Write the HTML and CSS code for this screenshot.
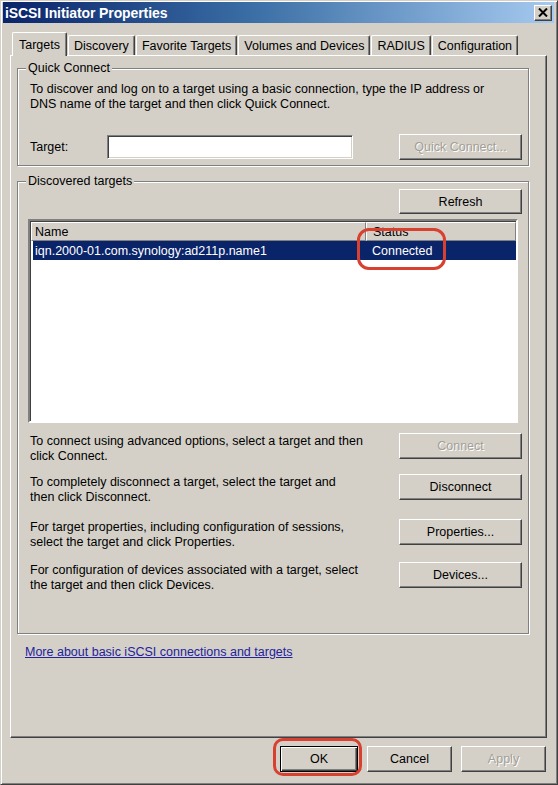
FILE: index.html
```html
<!DOCTYPE html>
<html>
<head>
<meta charset="utf-8">
<title>iSCSI Initiator Properties</title>
<link rel="stylesheet" href="styles.css">
</head>
<body>
<div class="window">
  <div class="titlebar">
    <span class="title">iSCSI Initiator Properties</span>
    <span class="close"><svg width="10" height="9" viewBox="0 0 10 9"><path d="M1 0.5 L9 8.5 M9 0.5 L1 8.5" stroke="#000" stroke-width="2" fill="none"/></svg></span>
  </div>
  <div class="content">
    <div class="tabs">
      <div class="tab active">Targets</div>
      <div class="tab">Discovery</div>
      <div class="tab">Favorite Targets</div>
      <div class="tab">Volumes and Devices</div>
      <div class="tab">RADIUS</div>
      <div class="tab">Configuration</div>
    </div>
    <div class="sheet">
      <fieldset class="group group-qc">
        <legend>Quick Connect</legend>
        <p class="qc-text">To discover and log on to a target using a basic connection, type the IP address or<br>DNS name of the target and then click Quick Connect.</p>
        <div class="qc-row">
          <span class="qc-label">Target:</span>
          <span class="input"></span>
          <span class="btn btn-wide disabled">Quick Connect...</span>
        </div>
      </fieldset>
      <fieldset class="group group-dt">
        <legend>Discovered targets</legend>
        <div class="refresh-row"><span class="btn btn-wide btn-refresh">Refresh</span></div>
        <div class="list">
          <div class="list-head">
            <div class="hcell hcell-name">Name</div>
            <div class="hcell hcell-status">Status</div>
          </div>
          <div class="list-row selected">
            <div class="cell cell-name">iqn.2000-01.com.synology:ad211p.name1</div>
            <div class="cell cell-status">Connected</div>
          </div>
        </div>
        <div class="action action-first">
          <p class="action-text">To connect using advanced options, select a target and then<br>click Connect.</p>
          <span class="btn btn-wide disabled">Connect</span>
        </div>
        <div class="action action-second">
          <p class="action-text">To completely disconnect a target, select the target and<br>then click Disconnect.</p>
          <span class="btn btn-wide">Disconnect</span>
        </div>
        <div class="action action-third">
          <p class="action-text">For target properties, including configuration of sessions,<br>select the target and click Properties.</p>
          <span class="btn btn-wide">Properties...</span>
        </div>
        <div class="action action-fourth">
          <p class="action-text">For configuration of devices associated with a target, select<br>the target and then click Devices.</p>
          <span class="btn btn-wide">Devices...</span>
        </div>
      </fieldset>
      <a class="more" href="#">More about basic iSCSI connections and targets</a>
    </div>
    <div class="footer">
      <span class="btn btn-ok default">OK</span>
      <span class="btn btn-foot">Cancel</span>
      <span class="btn btn-foot disabled">Apply</span>
    </div>
  </div>
  <div class="mark mark-status"></div>
  <div class="mark mark-ok"></div>
</div>
</body>
</html>
```
FILE: styles.css
```css
* { box-sizing: border-box; }
html, body { margin: 0; padding: 0; }
body {
  width: 558px;
  height: 785px;
  overflow: hidden;
  background: #d4d0c8;
  font-family: "Liberation Sans", Arial, sans-serif;
  font-size: 12.5px;
  color: #000;
}
.window {
  position: relative;
  width: 558px;
  height: 785px;
  background: #d4d0c8;
  border: 1px solid;
  border-color: #d4d0c8 #404040 #404040 #d4d0c8;
  box-shadow: inset 1px 1px 0 #fff, inset -1px -1px 0 #808080;
  padding: 1px 3px 3px 2px;
  display: flex;
  flex-direction: column;
}
.titlebar {
  height: 21px;
  flex: none;
  display: flex;
  align-items: center;
  justify-content: space-between;
  padding: 0 2px 0 2px;
  background: linear-gradient(to right, #0a246a 0%, #3a6ea5 45%, #a6caf0 100%);
}
.title {
  color: #fff;
  font-weight: bold;
  font-size: 14px;
  letter-spacing: -0.1px;
}
.close {
  width: 18px;
  height: 16px;
  display: flex;
  align-items: center;
  justify-content: center;
  background: #d4d0c8;
  border: 1px solid;
  border-color: #fff #404040 #404040 #fff;
  box-shadow: inset -1px -1px 0 #808080;
}
.content {
  flex: 1;
  display: flex;
  flex-direction: column;
  padding: 9px 7px 0 7px;
}
.tabs {
  height: 23px;
  display: flex;
  align-items: flex-end;
  gap: 1px;
  padding-left: 2px;
}
.tab {
  height: 20px;
  padding: 0 5px;
  display: flex;
  align-items: center;
  background: #d4d0c8;
  border: 1px solid;
  border-bottom: none;
  border-color: #fff #404040 #404040 #fff;
  box-shadow: inset -1px 0 0 #808080;
  border-radius: 2px 2px 0 0;
  white-space: nowrap;
}
.tab.active {
  position: relative;
  z-index: 2;
  height: 24px;
  margin-bottom: -1px;
  padding: 0 6px;
}
.sheet {
  height: 683px;
  flex: none;
  display: flex;
  flex-direction: column;
  align-items: flex-start;
  border: 1px solid;
  border-color: #fff #404040 #404040 #fff;
  box-shadow: inset -1px -1px 0 #808080;
  padding: 5px 16px 0 6px;
}
.group {
  margin: 0;
  padding: 0;
  width: 512px;
  border: 1px solid #808080;
  box-shadow: inset 1px 1px 0 #fff, 1px 1px 0 #fff;
  display: flex;
  flex-direction: column;
  align-items: stretch;
}
.group legend {
  margin-left: 8px;
  padding: 0 2px;
  line-height: 14px;
  background: #d4d0c8;
}
.group-dt {
  margin-top: 8px;
  padding-bottom: 40px;
}
.qc-text {
  margin: 7px 0 0 12px;
  line-height: 15px;
  white-space: nowrap;
}
.qc-row {
  margin: 22px 6px 5px 12px;
  height: 26px;
  display: flex;
  align-items: center;
}
.qc-label { width: 77px; }
.input {
  width: 246px;
  height: 24px;
  background: #fff;
  border: 1px solid;
  border-color: #808080 #fff #fff #808080;
  box-shadow: inset 1px 1px 0 #404040, inset -1px -1px 0 #d4d0c8;
}
.qc-row .btn { margin-left: auto; }
.btn {
  display: flex;
  align-items: center;
  justify-content: center;
  height: 26px;
  background: #d4d0c8;
  border: 1px solid;
  border-color: #fff #404040 #404040 #fff;
  box-shadow: inset -1px -1px 0 #808080;
  white-space: nowrap;
}
.btn-wide { width: 123px; }
.btn-refresh { height: 25px; margin-top: 1px; }
.btn.disabled {
  color: #a39f97;
  text-shadow: 1px 1px 0 #fff;
}
.refresh-row {
  display: flex;
  justify-content: flex-end;
  margin: 0 6px 0 0;
}
.list {
  margin: 5px 10px 0 10px;
  height: 204px;
  background: #fff;
  border: 2px solid;
  border-color: #808080 #fff #fff #808080;
  box-shadow: inset 1px 1px 0 #404040;
  padding: 1px 0 0 1px;
}
.list-head {
  display: flex;
  height: 19px;
}
.hcell {
  height: 19px;
  display: flex;
  align-items: center;
  padding-left: 3px;
  background: #d4d0c8;
  border: 1px solid;
  border-color: #fff #808080 #808080 #fff;
}
.hcell-name { width: 335px; }
.hcell-status { flex: 1; padding-left: 6px; }
.list-row {
  display: flex;
  height: 19px;
  align-items: center;
  margin-left: 2px;
}
.list-row.selected {
  background: #0a246a;
  color: #fff;
}
.cell-name { width: 333px; padding-left: 2px; }
.cell-status { padding-left: 6px; }
.action {
  display: flex;
  align-items: flex-start;
  height: 30px;
  margin: 0 6px 0 12px;
}
.action-first { margin-top: 10px; }
.action-second { margin-top: 11px; }
.action-third { margin-top: 15px; }
.action-fourth { margin-top: 13px; }
.action-text {
  margin: 1px 0 0 0;
  line-height: 15px;
  white-space: nowrap;
}
.action .btn { margin-left: auto; }
.group-dt { padding-bottom: 41px; }
.more {
  margin: 11px 0 0 8px;
  line-height: 15px;
  color: #22229e;
  text-decoration: underline;
}
.footer {
  display: flex;
  justify-content: flex-end;
  gap: 9px;
  margin-top: 8px;
  padding-right: 1px;
}
.btn-ok { width: 78px; }
.btn-foot { width: 85px; }
.btn.default {
  border-color: #000;
  box-shadow: inset 1px 1px 0 #fff, inset -1px -1px 0 #404040, inset -2px -2px 0 #808080;
}
.mark {
  position: absolute;
  border: 3px solid #d8402f;
  border-radius: 12px;
  pointer-events: none;
}
.mark-status { left: 356px; top: 227px; width: 89px; height: 42px; }
.mark-ok { left: 272px; top: 737px; width: 89px; height: 38px; border-radius: 10px; }
```
